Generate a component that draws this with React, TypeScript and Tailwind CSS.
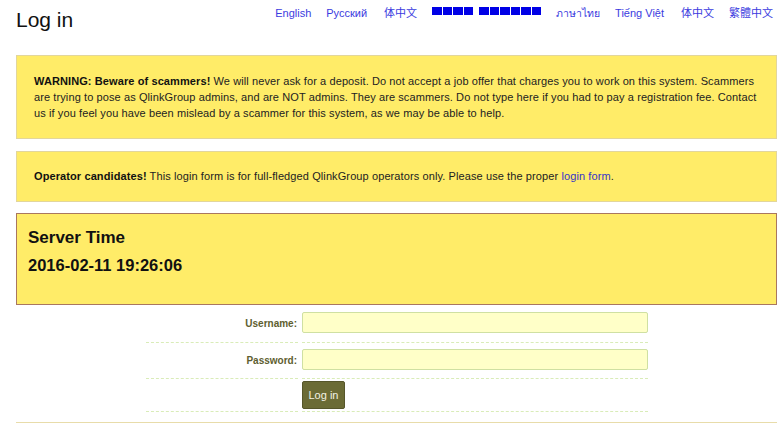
import React from "react";

const Tofu = ({ n }: { n: number }) => (
  <span className="inline-flex gap-[1px]">
    {Array.from({ length: n }).map((_, i) => (
      <span key={i} className="inline-block w-[9.5px] h-[8px] bg-[#0000e6]" />
    ))}
  </span>
);

export default function App() {
  const font = "font-['Liberation_Sans',Arial,'Noto_Sans_CJK_SC','Noto_Sans',sans-serif]";
  return (
    <div className={`w-[777px] h-[423px] overflow-hidden bg-white ${font}`}>
      <div className="flex justify-between h-[55px]">
        <h1 className="pl-4 pt-[7px] text-[21px] leading-[26px] text-[#111] font-normal">Log in</h1>
        <nav className="flex items-start gap-[15px] pt-[6px] pr-[4px] text-[11px] leading-[14px] text-[#3b3be0]">
          <a>English</a>
          <a>Русский</a>
          <a className="ml-[2px]">体中文</a>
          <span className="flex items-center gap-[6px] h-[14px] -mt-[2px]">
            <Tofu n={4} />
            <Tofu n={6} />
          </span>
          <a className="font-['Noto_Sans',sans-serif] text-[10.5px]">ภาษาไทย</a>
          <a>Tiếng Việt</a>
          <a className="ml-[2px]">体中文</a>
          <a>繁體中文</a>
        </nav>
      </div>

      <div className="ml-4 border border-[#e2d69c] bg-[#ffec68] pl-[17px] pr-[8px] pt-[17px] pb-[17px] text-[11px] leading-[16px] tracking-[0.1px] text-[#222]">
        <b className="text-[#111]">WARNING: Beware of scammers!</b> We will never ask for a deposit. Do not accept a job offer that charges you to work on this system. Scammers are trying to pose as QlinkGroup admins, and are NOT admins. They are scammers. Do not type here if you had to pay a registration fee. Contact us if you feel you have been mislead by a scammer for this system, as we may be able to help.
      </div>

      <div className="ml-4 mt-3 border border-[#e2d69c] bg-[#ffec68] px-[17px] pt-[16px] pb-[17px] text-[11px] leading-[16px] tracking-[0.1px] text-[#222]">
        <b className="text-[#111]">Operator candidates!</b> This login form is for full-fledged QlinkGroup operators only. Please use the proper <a className="text-[#3535c8]">login form</a>.
      </div>

      <div className="ml-4 mt-[11px] h-[92px] border border-[#a9775f] bg-[#ffec68] px-[11px] pt-[13px] text-[#111]">
        <div className="text-[17px] leading-[22px] font-bold">Server Time</div>
        <div className="mt-[5px] text-[16.5px] leading-[22px] font-bold">2016-02-11 19:26:06</div>
      </div>

      <div className="ml-[146px] mt-[1px] w-[502px] text-[10px]">
        <div className="flex h-[37px]">
          <div className="w-[152px] flex items-center justify-end pr-[1px] pb-[1px] border-b border-dashed border-[#d9ecb8] font-bold text-[#5e5e30]">Username:</div>
          <div className="flex-1 ml-[4px] pt-[6px] border-b border-dashed border-[#d9ecb8]">
            <div className="h-[21px] w-[346px] rounded-[2px] border border-[#cfe0a2] bg-[#ffffc8]" />
          </div>
        </div>
        <div className="flex h-[36px]">
          <div className="w-[152px] flex items-center justify-end pr-[1px] pb-[1px] border-b border-dashed border-[#d9ecb8] font-bold text-[#5e5e30]">Password:</div>
          <div className="flex-1 ml-[4px] pt-[6px] border-b border-dashed border-[#d9ecb8]">
            <div className="h-[21px] w-[346px] rounded-[2px] border border-[#cfe0a2] bg-[#ffffc8]" />
          </div>
        </div>
        <div className="flex h-[33px]">
          <div className="w-[152px] border-b border-dashed border-[#d9ecb8]" />
          <div className="flex-1 ml-[4px] pt-[2px] border-b border-dashed border-[#d9ecb8]">
            <button className="h-[28px] w-[43px] rounded-[2px] border border-[#56562a] bg-[#6b6b35] text-[11px] text-[#f2f2e4]">Log in</button>
          </div>
        </div>
      </div>

      <div className="ml-4 mt-[10px] h-[20px] border border-[#e8dcaa] bg-[#fff8d0]" />
    </div>
  );
}
